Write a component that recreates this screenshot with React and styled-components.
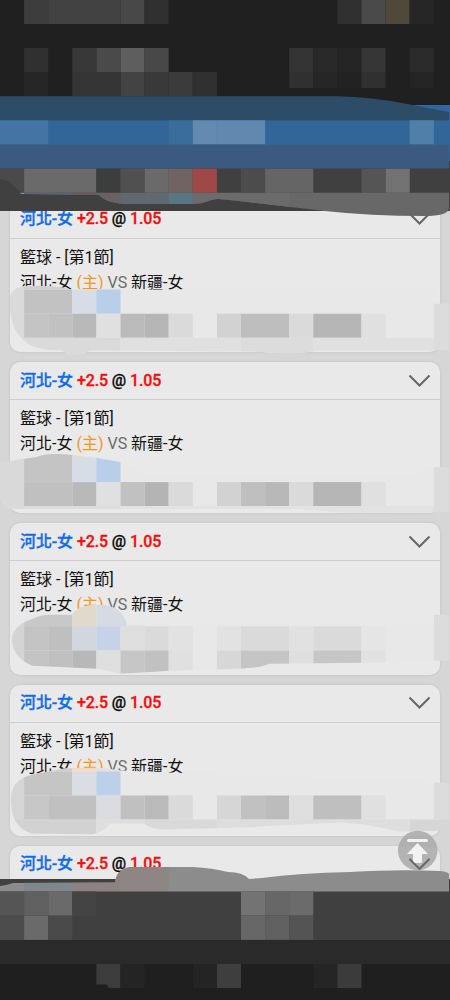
import React from "react";
import styled, { createGlobalStyle } from "styled-components";

const CELL = 24.1;

const GlobalStyle = createGlobalStyle`
  * {
    box-sizing: border-box;
  }
  body {
    margin: 0;
    background-color: #d6d6d6;
    font-family: Roboto, "Noto Sans CJK TC", sans-serif;
  }
`;

const Screen = styled.div`
  position: relative;
  display: flex;
  flex-direction: column;
  width: 450px;
  height: 1000px;
  overflow: hidden;
  background-color: #d6d6d6;
`;

const Header = styled.header`
  position: relative;
  z-index: 2;
  flex: none;
  height: 211px;
  background-color: #404040;
`;

const Footer = styled.footer`
  position: relative;
  z-index: 2;
  flex: none;
  height: 121px;
  background-color: #404040;
`;

const List = styled.main`
  flex: 1;
  min-height: 0;
  display: flex;
  flex-direction: column;
  gap: 10px;
  padding: 0 10px;
  overflow: hidden;
`;

const Card = styled.section`
  position: relative;
  flex: none;
  height: 151.3px;
  margin-top: ${(props) => (props.$first ? "-10.4px" : "0")};
  border-radius: 10px;
  background-color: #e9e9e9;
  box-shadow: 0 0 3px rgba(0, 0, 0, 0.1);
`;

const CardHead = styled.div`
  display: flex;
  justify-content: space-between;
  align-items: center;
  height: 38.2px;
  padding: 0 9px 0 10px;
  border-bottom: 1.5px solid #cecece;
`;

const Pick = styled.h2`
  margin: 0;
  font-size: 16px;
  font-weight: 500;
  line-height: 24px;
  letter-spacing: -0.11px;
  color: #0a0a0a;
  white-space: pre;
  -webkit-text-stroke: 0.3px currentColor;
`;

const Team = styled.span`
  color: #0d6cee;
`;

const Odds = styled.span`
  color: #f40d0d;
`;

const CardBody = styled.div`
  padding: 6px 10px;
  font-size: 16px;
  line-height: 25px;
  color: #111;
  white-space: pre;
`;

const Home = styled.span`
  color: #f8941f;
`;

const Versus = styled.span`
  color: #6b6b6b;
`;

const Overlay = styled.svg`
  position: absolute;
  left: ${(props) => props.$left || 0}px;
  top: ${(props) => props.$top || 0}px;
  overflow: visible;
  pointer-events: none;
`;

const TopButton = styled.button`
  position: absolute;
  z-index: 1;
  left: 397px;
  top: 830px;
  width: 41px;
  height: 41px;
  padding: 0;
  border: 0;
  background: none;
`;

// each cell is [column, span, colour]
const Row = ({ y, h = CELL, cells }) =>
  cells.map(([col, span, color]) => (
    <rect
      key={col}
      x={col * CELL}
      y={y}
      width={span * CELL}
      height={h}
      fill={color}
    />
  ));

const blurs = [
  {
    top: 200.6,
    path: "M10 300Q9 289 22 286Q50 284 72 289L130 288L150 289L434 289L434 303L449 303L449 350L434 350L320 350Q290 355 255 351L90 350Q75 359 62 350Q35 350 25 341Q9 328 10 300Z",
    base: "#e8e8e8",
    rows: [
      { y: 284, h: 70, cells: [[0, 1, "#dadada"]] },
      { y: 284, h: 5.2, cells: [[1, 2, "#d0d0d0"], [3, 2, "#dedede"]] },
      { y: 289.2, cells: [[1, 2, "#c2c2c2"], [3, 1, "#d7dde7"], [4, 1, "#b9cee9"]] },
      { y: 313.3, cells: [[1, 1, "#c4c4c4"], [2, 1, "#c1c1c1"], [3, 1, "#b9b9b9"], [4, 1, "#e0e0e0"], [5, 1, "#bababa"], [6, 1, "#b6b6b6"], [7, 1, "#dadada"], [9, 1, "#d2d2d2"], [10, 2, "#bebebe"], [12, 1, "#dadada"], [13, 2, "#b6b6b6"], [15, 1, "#e0e0e0"]] },
      { y: 337.4, h: 22, cells: [[0, 5, "#dadada"], [5, 5, "#e0e0e0"], [10, 3, "#dcdcdc"], [13, 5, "#e0e0e0"]] },
      { y: 303, h: 47, cells: [[18, 1, "#dcdcdc"]] },
    ],
  },
  {
    top: 361.9,
    path: "M0 463L10 461L37 457Q46 453 60 454L72 455L97 458L120 462L145 474L418 474L434 467L449 467L449 512L350 513L300 509L10 509Q0 505 0 490Z",
    base: "#e8e8e8",
    rows: [
      { y: 452, h: 60, cells: [[0, 1, "#d9d9d9"]] },
      { y: 452, h: 5, cells: [[1, 2, "#dcdcdc"], [3, 1, "#eed9be"]] },
      { y: 454, h: 28, cells: [[1, 2, "#c3c3c3"]] },
      { y: 457, h: 25, cells: [[3, 1, "#d6dde6"], [4, 1, "#b9cee9"]] },
      { y: 482, cells: [[1, 2, "#c0c0c0"], [3, 1, "#b9b9b9"], [4, 1, "#e0e0e0"], [5, 1, "#c1c1c1"], [6, 1, "#b4b4b4"], [7, 1, "#dadada"], [9, 1, "#d2d2d2"], [10, 1, "#bfbfbf"], [11, 1, "#b8b8b8"], [12, 1, "#dadada"], [13, 2, "#b6b6b6"], [15, 1, "#e0e0e0"]] },
      { y: 506, h: 9, cells: [[0, 5, "#dcdcdc"], [5, 14, "#e2e2e2"]] },
      { y: 467, h: 46, cells: [[18, 1, "#dcdcdc"]] },
    ],
  },
  {
    top: 523.2,
    path: "M12 640Q12 627 30 620L38 617Q42 615 50 615L72 615Q78 605 98 605Q123 605 127 626L240 624L434 626L434 615L449 615L449 661L434 662L362 663L270 664L260 667L240 669L170 671L120 674L98 669L32 666Q12 657 12 640Z",
    base: "#e8e8e8",
    rows: [
      { y: 604, h: 70, cells: [[0, 1, "#d4d4d4"]] },
      { y: 604, h: 23, cells: [[1, 2, "#c8c8c8"], [3, 1, "#e1d9cb"], [4, 2, "#d6dae2"]] },
      { y: 626.6, cells: [[1, 1, "#c3c3c3"], [2, 1, "#bfbfbf"], [3, 1, "#d2d6df"], [4, 1, "#c5d2e8"], [5, 1, "#dedede"], [6, 1, "#dadada"], [7, 1, "#e2e2e2"], [9, 1, "#e2e2e2"], [10, 2, "#dadada"], [12, 1, "#e1e1e1"], [13, 2, "#dadada"], [15, 1, "#e5e5e5"]] },
      { y: 650.7, cells: [[1, 1, "#c4c4c4"], [2, 1, "#c0c0c0"], [3, 1, "#b8b8b8"], [4, 1, "#dedede"], [5, 1, "#c6c6c6"], [6, 1, "#c1c1c1"], [7, 1, "#e0e0e0"], [9, 1, "#d7d7d7"], [10, 2, "#c5c5c5"], [12, 1, "#dfdfdf"], [13, 2, "#c6c6c6"], [15, 1, "#e1e1e1"]] },
      { y: 615, h: 46, cells: [[18, 1, "#dcdcdc"]] },
    ],
  },
  {
    top: 684.5,
    path: "M11 800Q10 779 33 774L64 768L98 767L120 770L145 771L434 782L449 782L449 830L400 831L365 824L340 822L240 827L160 829Q148 827 144 823L110 823Q105 831 92 834L32 833Q11 827 11 800Z",
    base: "#e8e8e8",
    rows: [
      { y: 766, h: 70, cells: [[0, 1, "#d5d5d5"]] },
      { y: 766, h: 5, cells: [[2, 1, "#cecece"], [3, 1, "#f2dcc3"], [4, 1, "#e4dfdc"]] },
      { y: 771, cells: [[1, 2, "#c5c5c5"], [3, 1, "#dadde4"], [4, 1, "#bcd0ea"]] },
      { y: 795, cells: [[1, 1, "#c7c7c7"], [2, 2, "#c0c0c0"], [4, 1, "#dadce1"], [5, 1, "#c0c0c0"], [6, 1, "#bababa"], [7, 1, "#dadada"], [9, 1, "#d6d6d6"], [10, 1, "#c1c1c1"], [11, 1, "#bcbcbc"], [12, 1, "#dedede"], [13, 2, "#bfbfbf"], [15, 1, "#e0e0e0"]] },
      { y: 819, h: 17, cells: [[0, 4, "#d2d2d2"], [4, 2, "#dedede"], [6, 3, "#d9d9d9"], [9, 7, "#dddddd"], [16, 1, "#dedede"], [17, 2, "#d6d6d6"]] },
      { y: 782, h: 37, cells: [[18, 1, "#dcdcdc"]] },
    ],
  },
];

function Blur({ blur, index }) {
  return (
    <Overlay
      $left={-10}
      width="450"
      height="151.3"
      viewBox={`0 ${blur.top} 450 151.3`}
    >
      <clipPath id={`brush-${index}`}>
        <path d={blur.path} />
      </clipPath>
      <g clipPath={`url(#brush-${index})`}>
        <rect x="0" y={blur.top} width="434" height="170" fill={blur.base} />
        {blur.rows.map((row, i) => (
          <Row key={i} {...row} />
        ))}
      </g>
    </Overlay>
  );
}

function BetCard({ blur, index }) {
  return (
    <Card $first={index === 0}>
      <CardHead>
        <Pick>
          <Team>河北-女</Team> <Odds>+2.5</Odds> @ <Odds>1.05</Odds>
        </Pick>
        <svg width="23" height="16" viewBox="0 0 23 16">
          <path d="M1.5 2.5L11.5 12.5L21.5 2.5" fill="none" stroke="#666" strokeWidth="2" />
        </svg>
      </CardHead>
      {blur && (
        <>
          <CardBody>
            <div>籃球 - [第1節]</div>
            <div>
              河北-女 <Home>(主)</Home> <Versus>VS</Versus> 新疆-女
            </div>
          </CardBody>
          <Blur blur={blur} index={index} />
        </>
      )}
    </Card>
  );
}

function HeaderMosaic() {
  return (
    <Overlay width="450" height="220" viewBox="0 0 450 220">
      <rect width="450" height="106" fill="#202020" />
      <Row y={0} h={24} cells={[[1, 1, "#3d3d3d"], [2, 3, "#424242"], [5, 1, "#484848"], [6, 1, "#303030"], [14, 1, "#303030"], [15, 1, "#4a4a4a"], [16, 1, "#504839"], [17, 1, "#262626"]]} />
      <Row y={48} cells={[[1, 1, "#303030"], [3, 1, "#383838"], [4, 1, "#4a4a4a"], [5, 1, "#5e5e5e"], [6, 1, "#484848"], [12, 1, "#343434"], [13, 1, "#292929"], [14, 1, "#252525"], [15, 1, "#363636"], [17, 1, "#2b2b2b"]]} />
      <Row y={72} cells={[[1, 1, "#262626"], [3, 2, "#353535"], [5, 1, "#434343"], [6, 1, "#393939"], [7, 1, "#3b3b3b"], [8, 1, "#303030"]]} />
      <Row y={72} h={16} cells={[[12, 1, "#303030"], [13, 1, "#262626"], [14, 1, "#222222"], [15, 1, "#303030"], [17, 1, "#252525"]]} />
      <rect x="400" y="105" width="50" height="56" fill="#31679e" />
      <path d="M0 96.3H335Q375 97 410 104.5L449 112V121H0Z" fill="#2c4c68" />
      <rect y="120.3" width="450" height="25" fill="#326698" />
      <Row y={120.3} cells={[[0, 2, "#4474a4"], [7, 1, "#3a6c9c"], [8, 1, "#648ab0"], [9, 2, "#6188ae"], [17, 1, "#5080aa"]]} />
      <rect y="144.7" width="449" height="24" fill="#3a5a80" />
      <rect y="168.7" width="450" height="42.3" fill="#404040" />
      <path d="M0 168.7H24V194Q17 190 13 185T0 179Z" fill="#4a4a4a" />
      <Row y={168.7} cells={[[1, 3, "#6a6a6a"], [4, 1, "#3c3e3e"], [5, 1, "#505050"], [6, 1, "#6a6a6a"], [7, 1, "#706361"], [8, 1, "#a04848"], [10, 1, "#4c4c4c"], [11, 2, "#656565"], [15, 1, "#555555"], [16, 1, "#727272"]]} />
      <clipPath id="brush-header">
        <path d="M19 192.8H449V209Q447 216 425 216Q370 216 325 211L225 199.5Q215 198 210 200.5Q202 204 190 204L135 204Q108 205 99 195L22 194Z" />
      </clipPath>
      <g clipPath="url(#brush-header)">
        <rect y="192" width="450" height="28" fill="#686868" />
        <Row y={192.8} cells={[[0, 1, "#8d98a4"], [1, 2, "#586274"], [3, 1, "#675b59"], [4, 1, "#6a6260"], [5, 2, "#616970"], [7, 1, "#597782"], [8, 4, "#6b6b6b"]]} />
      </g>
    </Overlay>
  );
}

function FooterMosaic() {
  return (
    <Overlay $top={-21} width="450" height="142" viewBox="0 858 450 142">
      <clipPath id="brush-footer">
        <path d="M0 886Q8 885 13 883L115 882.5Q117 867 133 867L193 867Q212 868 228 872Q243 872 249 879L262 878Q300 873 350 872Q400 869 440 871Q448 872 449 874V892H0Z" />
      </clipPath>
      <g clipPath="url(#brush-footer)">
        <rect y="858" width="450" height="34" fill="#8c8c8c" />
        <Row y={866} h={26} cells={[[1, 2, "#7e868e"], [3, 2, "#8b8380"], [5, 2, "#8d8684"]]} />
      </g>
      <rect y="891.5" width="450" height="48.5" fill="#404040" />
      <Row y={891.5} cells={[[0, 1, "#555555"], [1, 1, "#606060"], [2, 1, "#6a6a6a"], [3, 1, "#444444"], [10, 1, "#737373"], [11, 1, "#676767"], [12, 1, "#6b6b6b"]]} />
      <Row y={915.8} cells={[[0, 1, "#4c4c4c"], [1, 1, "#6a6a6a"], [2, 1, "#4a4a4a"], [10, 1, "#676767"], [11, 1, "#606060"], [12, 1, "#545454"]]} />
      <rect y="940" width="450" height="24" fill="#2a2a2a" />
      <rect y="964" width="450" height="36" fill="#1f1f1f" />
      <Row y={964} cells={[[4, 1, "#3c3c3c"], [5, 1, "#242424"], [8, 1, "#242424"], [9, 1, "#3e3e3e"], [13, 1, "#252525"], [14, 1, "#3b3b3b"]]} />
      <path d="M96 984.5H107L109 989H96Z" fill="#1f1f1f" />
    </Overlay>
  );
}

export default function App() {
  return (
    <>
      <GlobalStyle />
      <Screen>
        <Header>
          <HeaderMosaic />
        </Header>
        <List>
          {[...blurs, null].map((blur, i) => (
            <BetCard key={i} blur={blur} index={i} />
          ))}
        </List>
        <TopButton aria-label="top">
          <svg width="41" height="41" viewBox="397 830 41 41">
            <circle cx="417.7" cy="850.5" r="19.8" fill="#a9a9a9" fillOpacity="0.85" />
            <path d="M408.5 840.5H426.5" stroke="#f2f2f2" strokeWidth="3" strokeLinecap="round" />
            <path d="M417.5 843L428 854H422V862Q422 863 421 863H414Q413 863 413 862V854H407Z" fill="#f2f2f2" />
            <path d="M409.5 859L419.5 869L429.5 859" fill="none" stroke="#666" strokeWidth="1.8" />
          </svg>
        </TopButton>
        <Footer>
          <FooterMosaic />
        </Footer>
      </Screen>
    </>
  );
}
